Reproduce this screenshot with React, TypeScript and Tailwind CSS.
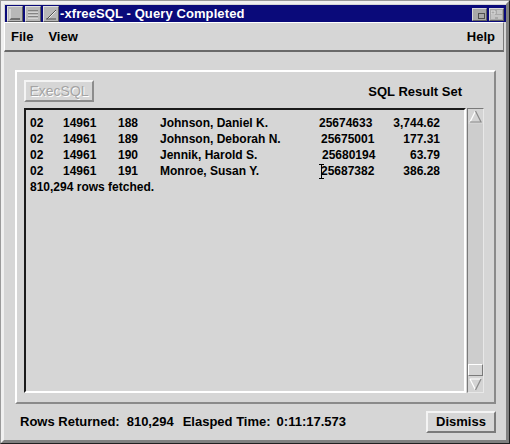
import React from "react";

const rows = [
  { a: "02", b: "14961", c: "188", name: "Johnson, Daniel K.", num: "25674633", pad: "pl-0", amt: "3,744.62" },
  { a: "02", b: "14961", c: "189", name: "Johnson, Deborah N.", num: "25675001", pad: "pl-[2px]", amt: "177.31" },
  { a: "02", b: "14961", c: "190", name: "Jennik, Harold S.", num: "25680194", pad: "pl-[3px]", amt: "63.79" },
  { a: "02", b: "14961", c: "191", name: "Monroe, Susan Y.", num: "25687382", pad: "pl-[2px]", amt: "386.28", cursor: true },
];

function TitleBtn({ children }: { children: React.ReactNode }) {
  return (
    <div className="w-[16px] h-[16px] bg-[#b8b8b8] border border-t-[#e0e0e0] border-l-[#e0e0e0] border-r-[#606060] border-b-[#606060] flex items-center justify-center">
      {children}
    </div>
  );
}

export default function App() {
  return (
    <div
      className="w-[510px] h-[444px] bg-[#d6d6d6] flex flex-col border-[1px] border-t-[#9a9a9a] border-l-[#9a9a9a] border-r-[#202020] border-b-[#202020] overflow-hidden"
      style={{ fontFamily: '"Liberation Sans", Arial, sans-serif' }}
    >
      <div className="flex flex-col flex-1 border-[3px] border-t-[#f0f0f0] border-l-[#f0f0f0] border-r-[#808080] border-b-[#808080]">
        {/* Title bar */}
        <div className="h-[17px] mt-[1px] ml-[1px] bg-[#0a0a7a] flex items-center pl-[2px] pr-[2px] shrink-0">
          <div className="flex gap-[2px]">
            <TitleBtn>
              <svg width="12" height="12" viewBox="0 0 12 12">
                <path d="M1 11 H11" stroke="#5a5a5a" strokeWidth="1.5" />
                <path d="M1 1 V11" stroke="#f0f0f0" strokeWidth="1" />
              </svg>
            </TitleBtn>
            <TitleBtn>
              <svg width="12" height="12" viewBox="0 0 12 12">
                <path d="M1 3 H11 M1 6 H11 M1 9 H11" stroke="#505050" strokeWidth="1" />
                <path d="M1 4 H11 M1 7 H11 M1 10 H11" stroke="#f0f0f0" strokeWidth="1" />
              </svg>
            </TitleBtn>
            <TitleBtn>
              <svg width="12" height="12" viewBox="0 0 12 12">
                <path d="M2 11 L11 2" stroke="#505050" strokeWidth="1" />
                <path d="M3 11 L11 3" stroke="#f0f0f0" strokeWidth="1" />
                <path d="M1 11 H11" stroke="#505050" strokeWidth="1" />
              </svg>
            </TitleBtn>
          </div>
          <span className="text-white font-bold text-[13px] leading-none ml-[1px] tracking-[0.1px]">-xfreeSQL - Query Completed</span>
          <div className="flex-1" />
          <div className="flex gap-[2px] mt-[1px]">
            <div className="w-[15px] h-[13px] bg-[#a8a8a8] border border-t-[#d8d8d8] border-l-[#d8d8d8] border-r-[#606060] border-b-[#606060] flex items-end justify-end p-[1px]">
              <div className="w-[7px] h-[6px] border border-[#505050] border-t-[#505050]" />
            </div>
            <div className="w-[15px] h-[13px] bg-[#a8a8a8] border border-t-[#d8d8d8] border-l-[#d8d8d8] border-r-[#606060] border-b-[#606060] flex items-center justify-center">
              <svg width="11" height="9" viewBox="0 0 11 9">
                <path d="M0 1 H4 V4 H0 Z M6 1 H11 M6 3 H11 M0 6 H11 M0 8 H4 M7 8 H11" stroke="#e0e0e0" strokeWidth="1" fill="none" />
              </svg>
            </div>
          </div>
        </div>

        {/* Menu bar */}
        <div className="h-[30px] shrink-0 flex items-center border border-t-white border-l-white border-r-[#7a7a7a] border-b-[#6a6a6a] border-b-2 mr-[2px] px-[6px] text-[13px] font-bold text-black">
          <span>File</span>
          <span className="ml-[15px]">View</span>
          <div className="flex-1" />
          <span className="mr-[2px]">Help</span>
        </div>

        {/* Frame */}
        <div className="mt-[18px] ml-[11px] mr-[10px] h-[334px] shrink-0 border-2 border-t-white border-l-white border-r-[#8a8a8a] border-b-[#8a8a8a] pl-[7px] pr-[8px] pt-[8px] flex flex-col">
          <div className="flex items-center h-[22px]">
            <div className="w-[70px] h-[22px] border-2 border-t-[#f4f4f4] border-l-[#f4f4f4] border-r-[#8c8c8c] border-b-[#8c8c8c] flex items-center justify-center text-[14px] text-[#a4a4a4] [text-shadow:1px_1px_0_#ffffff]">
              ExecSQL
            </div>
            <div className="flex-1" />
            <span className="text-[13px] font-bold text-black mr-[24px] mt-[1px]">SQL Result Set</span>
          </div>
          <div className="flex mt-[6px] h-[285px]">
            {/* text area */}
            <div className="w-[442px] h-[285px] border-2 border-t-[#1a1a1a] border-l-[#1a1a1a] border-r-white border-b-white pl-[4px] pt-[5px] text-[12px] font-bold text-black leading-[16px]">
              {rows.map((r, i) => (
                <div key={i} className="flex h-[16px] whitespace-nowrap">
                  <span className="w-[33px]">{r.a}</span>
                  <span className="w-[55px]">{r.b}</span>
                  <span className="w-[42px]">{r.c}</span>
                  <span className="w-[159px]">{r.name}</span>
                  <span className={`w-[62px] relative ${r.pad}`}>
                    {r.cursor && (
                      <span className="absolute left-0 top-[1px] w-[5px] h-[15px] flex flex-col items-center">
                        <span className="w-[5px] h-px bg-black" />
                        <span className="w-px flex-1 bg-black" />
                        <span className="w-[5px] h-px bg-black" />
                      </span>
                    )}
                    {r.num}
                  </span>
                  <span className="w-[59px] text-right">{r.amt}</span>
                </div>
              ))}
              <div className="h-[16px] whitespace-nowrap">810,294 rows fetched.</div>
            </div>
            {/* scrollbar */}
            <div className="w-[17px] h-[285px] ml-[1px] bg-[#cdcdcd] border border-t-[#7a7a7a] border-l-[#7a7a7a] border-r-[#e8e8e8] border-b-[#e8e8e8] flex flex-col">
              <div className="h-[15px] w-full flex items-center justify-center bg-[#d4d4d4]">
                <svg width="13" height="13" viewBox="0 0 13 13">
                  <path d="M6.5 1 L1 12" stroke="#ffffff" strokeWidth="1.2" fill="none" />
                  <path d="M6.5 1 L12 12 H1" stroke="#8a8a8a" strokeWidth="1.2" fill="none" />
                </svg>
              </div>
              <div className="flex-1" />
              <div className="h-[12px] w-full bg-[#d4d4d4] border border-t-white border-l-white border-r-[#7a7a7a] border-b-[#7a7a7a]" />
              <div className="h-[16px] w-full flex items-center justify-center bg-[#d4d4d4]">
                <svg width="13" height="13" viewBox="0 0 13 13">
                  <path d="M1 1 H12 M1 1 L6.5 12" stroke="#ffffff" strokeWidth="1.2" fill="none" />
                  <path d="M12 1 L6.5 12" stroke="#8a8a8a" strokeWidth="1.2" fill="none" />
                </svg>
              </div>
            </div>
          </div>
        </div>

        {/* status */}
        <div className="flex items-center mt-[7px] ml-[16px] mr-[10px] h-[22px] text-[13px] font-bold text-black whitespace-nowrap">
          <span>Rows Returned:</span>
          <span className="ml-[7px]">810,294</span>
          <span className="ml-[9px]">Elasped Time:</span>
          <span className="ml-[6px]">0:11:17.573</span>
          <div className="flex-1" />
          <div className="w-[70px] h-[22px] border-2 border-t-[#f4f4f4] border-l-[#f4f4f4] border-r-[#7a7a7a] border-b-[#7a7a7a] flex items-center justify-center">
            Dismiss
          </div>
        </div>
      </div>
    </div>
  );
}
